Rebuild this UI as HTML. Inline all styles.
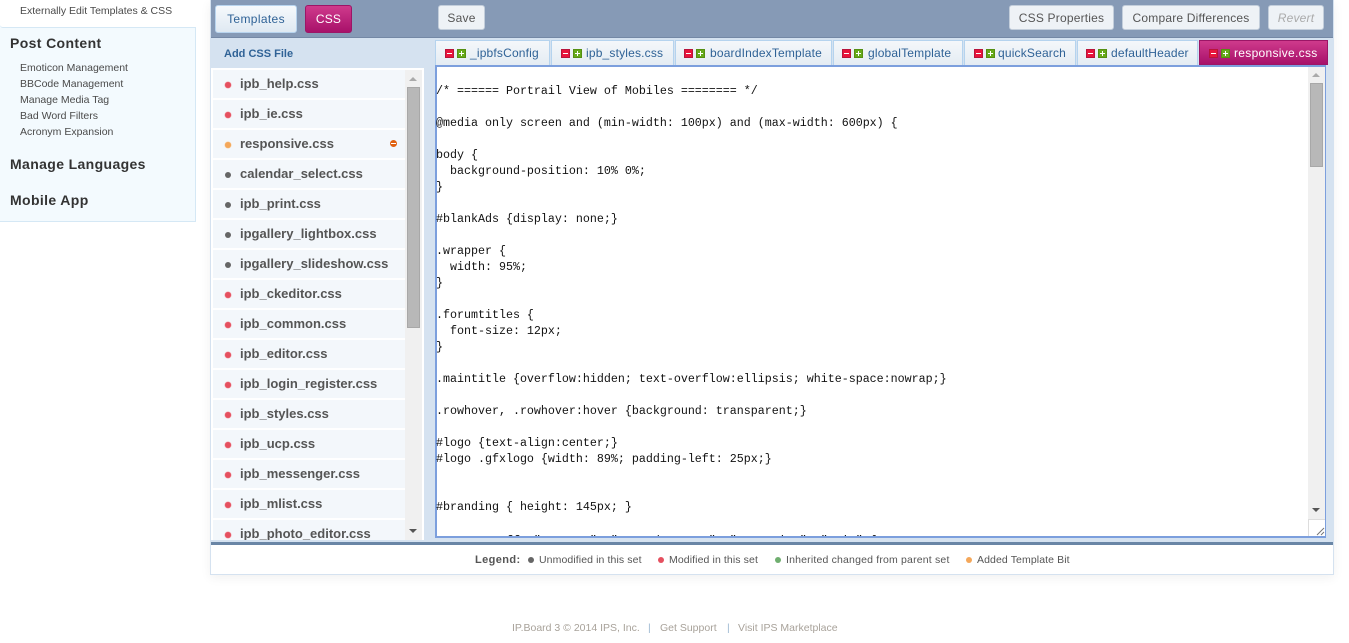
<!DOCTYPE html>
<html><head><meta charset="utf-8"><title>Template Editor</title>
<style>
html,body{margin:0;padding:0;width:1349px;height:643px;overflow:hidden;background:#fff;font-family:"Liberation Sans",Arial,sans-serif}
div,span,a{box-sizing:border-box}
.a{position:absolute;white-space:nowrap}
.btn{position:absolute;top:5px;height:25px;line-height:24px;text-align:center;font-size:12px;letter-spacing:.2px;color:#555;background:#eef2f6;border:1px solid #c3cedb;border-radius:3px}
.side{left:20px;font-size:10.5px;color:#4a4a4a;height:16px;line-height:16px}
.h{left:10px;font-size:14px;font-weight:bold;color:#333;height:20px;line-height:20px;letter-spacing:.37px}
.it{position:absolute;left:213px;width:192px;height:28px;background:#f3f7fb}
.it b{position:absolute;left:27px;top:6px;font-size:13px;line-height:16px;color:#555;white-space:nowrap}
.it i{position:absolute;left:12px;top:12px;width:6px;height:6px;border-radius:50%;background:#e5505f;box-shadow:0 0 0 .5px #f2a0a8}
.tab{position:absolute;top:40px;height:25px;background:linear-gradient(#f4f7fa,#e4ecf3);border:1px solid #b5d3ee;border-bottom:0;font-size:12px;letter-spacing:.18px;color:#2f6296;line-height:24px;white-space:nowrap}
.tab span{position:absolute;top:0;white-space:nowrap}
.tab span.m,.tab span.p{top:8px;width:9px;height:9px}
.tab span.m{background:#e8153c;border:1px solid #b8143a}.m:after{content:"";position:absolute;left:1px;top:3px;width:5px;height:1px;background:#fff}
.tab span.p{background:#66aa1a;border:1px solid #558f12}.p:after{content:"";position:absolute;left:1px;top:3px;width:5px;height:1px;background:#fff}.p:before{content:"";position:absolute;left:3px;top:1px;width:1px;height:5px;background:#fff}
.tab.on{background:linear-gradient(#cf3a8c,#a8116a);border:1px solid #9c1566;color:#fff;letter-spacing:.3px}
pre{position:absolute;left:436px;top:83px;margin:0;font-family:"Liberation Mono","Courier New",monospace;font-size:11.67px;line-height:16px;color:#111;width:870px;height:453px;overflow:hidden}
.lg{position:absolute;top:553px;font-size:10.5px;color:#555;line-height:14px;white-space:nowrap}
.dot{position:absolute;top:557px;width:6px;height:6px;border-radius:50%}
.ft{position:absolute;top:621px;font-size:10.5px;line-height:14px;color:#a8a29a;white-space:nowrap}
</style></head><body>
<!-- sidebar -->
<div class="a" style="left:0;top:0;width:196px;height:222px;background:#f3fafe;border-right:1px solid #d5e8f5;border-bottom:1px solid #d5e8f5"></div>
<div class="a" style="left:0;top:0;width:196px;height:28px;background:#fff;border-bottom:1px solid #d5e8f5;border-bottom-left-radius:3px"></div>
<div class="a side" style="top:3px">Externally Edit Templates &amp; CSS</div>
<div class="a h" style="top:33px">Post Content</div>
<div class="a side" style="top:60px">Emoticon Management</div>
<div class="a side" style="top:76px">BBCode Management</div>
<div class="a side" style="top:92px">Manage Media Tag</div>
<div class="a side" style="top:108px">Bad Word Filters</div>
<div class="a side" style="top:124px">Acronym Expansion</div>
<div class="a h" style="top:154px">Manage Languages</div>
<div class="a h" style="top:190px">Mobile App</div>
<!-- main -->
<div class="a" style="left:210px;top:0;width:1124px;height:575px;background:#fff;border:1px solid #d5e2f0;border-top:0;box-shadow:0 3px 10px rgba(0,0,0,.06)"></div>
<div class="a" style="left:211px;top:0;width:1122px;height:38px;background:#869ab6;border-bottom:1px solid #7488a5"></div>
<div class="a" style="left:211px;top:38px;width:1122px;height:505px;background:#d5e2f0"></div>
<div class="a" style="left:211px;top:542px;width:1122px;height:3px;background:#6a86a6"></div>
<div class="btn" style="left:215px;top:5px;width:82px;height:28px;line-height:26px;letter-spacing:.35px;color:#2f6296;background:linear-gradient(#f6f9fc,#dfe9f2);border-color:#b8d4ee">Templates</div>
<div class="btn" style="left:305px;top:5px;width:47px;height:28px;line-height:26px;color:#fff;background:linear-gradient(#cf3a8c,#a8116a);border-color:#9c1566">CSS</div>
<div class="btn" style="left:438px;width:47px">Save</div>
<div class="btn" style="left:1009px;width:105px">CSS Properties</div>
<div class="btn" style="left:1122px;width:138px">Compare Differences</div>
<div class="btn" style="left:1268px;width:56px;color:#aaa;font-style:italic">Revert</div>
<div class="a" style="left:224px;top:47px;font-size:11px;font-weight:bold;color:#2f6296;line-height:14px">Add CSS File</div>
<!-- list -->
<div class="a" style="left:211px;top:68px;width:213px;height:472px;background:#fff;overflow:hidden"></div>
<div class="it" style="top:70px"><i></i><b>ipb_help.css</b></div>
<div class="it" style="top:100px"><i></i><b>ipb_ie.css</b></div>
<div class="it" style="top:130px"><i style="background:#f4a75a;box-shadow:0 0 0 .5px #f8cfa0"></i><b>responsive.css</b><span style="position:absolute;left:177px;top:10px;width:7px;height:7px;border-radius:50%;background:#e0600f"><span style="position:absolute;left:1px;top:3px;width:5px;height:1px;background:#fff"></span></span></div>
<div class="it" style="top:160px"><i style="background:#666;box-shadow:none"></i><b>calendar_select.css</b></div>
<div class="it" style="top:190px"><i style="background:#666;box-shadow:none"></i><b>ipb_print.css</b></div>
<div class="it" style="top:220px"><i style="background:#666;box-shadow:none"></i><b>ipgallery_lightbox.css</b></div>
<div class="it" style="top:250px"><i style="background:#666;box-shadow:none"></i><b>ipgallery_slideshow.css</b></div>
<div class="it" style="top:280px"><i></i><b>ipb_ckeditor.css</b></div>
<div class="it" style="top:310px"><i></i><b>ipb_common.css</b></div>
<div class="it" style="top:340px"><i></i><b>ipb_editor.css</b></div>
<div class="it" style="top:370px"><i></i><b>ipb_login_register.css</b></div>
<div class="it" style="top:400px"><i></i><b>ipb_styles.css</b></div>
<div class="it" style="top:430px"><i></i><b>ipb_ucp.css</b></div>
<div class="it" style="top:460px"><i></i><b>ipb_messenger.css</b></div>
<div class="it" style="top:490px"><i></i><b>ipb_mlist.css</b></div>
<div class="it" style="top:520px;height:20px;overflow:hidden"><i></i><b>ipb_photo_editor.css</b></div>
<div class="a" style="left:405px;top:70px;width:17px;height:470px;background:#f0f0f0"></div>
<div class="a" style="left:407px;top:87px;width:13px;height:241px;background:#b8b8b8;border:1px solid #a8a8a8"></div>
<div class="a" style="left:409px;top:77px;width:0;height:0;border-left:4px solid transparent;border-right:4px solid transparent;border-bottom:4px solid #aaa"></div>
<div class="a" style="left:409px;top:529px;width:0;height:0;border-left:4px solid transparent;border-right:4px solid transparent;border-top:4px solid #555"></div>
<!-- tabs -->
<div class="tab" style="left:435px;width:115px"><span class="m" style="left:9px"></span><span class="p" style="left:21px"></span><span style="left:34px">_ipbfsConfig</span></div>
<div class="tab" style="left:551px;width:123px"><span class="m" style="left:9px"></span><span class="p" style="left:21px"></span><span style="left:34px">ipb_styles.css</span></div>
<div class="tab" style="left:675px;width:157px"><span class="m" style="left:8px"></span><span class="p" style="left:20px"></span><span style="left:34px">boardIndexTemplate</span></div>
<div class="tab" style="left:833px;width:130px"><span class="m" style="left:8px"></span><span class="p" style="left:20px"></span><span style="left:34px">globalTemplate</span></div>
<div class="tab" style="left:964px;width:112px"><span class="m" style="left:9px"></span><span class="p" style="left:21px"></span><span style="left:33px">quickSearch</span></div>
<div class="tab" style="left:1077px;width:121px"><span class="m" style="left:8px"></span><span class="p" style="left:20px"></span><span style="left:33px">defaultHeader</span></div>
<div class="tab on" style="left:1199px;width:129px"><span class="m" style="left:9px"></span><span class="p" style="left:21px"></span><span style="left:34px">responsive.css</span></div>
<!-- editor -->
<div class="a" style="left:435px;top:65px;width:891px;height:473px;background:#fff;border:2px solid #7c9fdd"></div>
<pre>/* ====== Portrail View of Mobiles ======== */

@media only screen and (min-width: 100px) and (max-width: 600px) {

body {
  background-position: 10% 0%;
}

#blankAds {display: none;}

.wrapper {
  width: 95%;
}

.forumtitles {
  font-size: 12px;
}

.maintitle {overflow:hidden; text-overflow:ellipsis; white-space:nowrap;}

.rowhover, .rowhover:hover {background: transparent;}

#logo {text-align:center;}
#logo .gfxlogo {width: 89%; padding-left: 25px;}


#branding { height: 145px; }

<span style="position:relative;top:2px">#content_off, "content", "secondary_nav", "community", "main" {</span></pre>
<div class="a" style="left:1308px;top:67px;width:17px;height:452px;background:#f0f0f0"></div>
<div class="a" style="left:1310px;top:83px;width:13px;height:84px;background:#b8b8b8;border:1px solid #a8a8a8"></div>
<div class="a" style="left:1312px;top:73px;width:0;height:0;border-left:4px solid transparent;border-right:4px solid transparent;border-bottom:4px solid #aaa"></div>
<div class="a" style="left:1312px;top:508px;width:0;height:0;border-left:4px solid transparent;border-right:4px solid transparent;border-top:4px solid #555"></div>
<div class="a" style="left:1308px;top:519px;width:17px;height:17px;background:#fff;border:1px solid #ddd;border-bottom:0;border-right:0"></div>
<svg class="a" style="left:1316px;top:527px" width="9" height="9"><path d="M1 8L8 1M5 8L8 5" stroke="#777" fill="none"/></svg>
<!-- legend -->
<div class="lg" style="left:475px;font-weight:bold;font-size:11px;letter-spacing:.4px">Legend:</div>
<span class="dot" style="left:528px;background:#666"></span><div class="lg" style="left:539px;letter-spacing:.1px">Unmodified in this set</div>
<span class="dot" style="left:658px;background:#e5505f"></span><div class="lg" style="left:669px;letter-spacing:.1px">Modified in this set</div>
<span class="dot" style="left:775px;background:#6fae6f"></span><div class="lg" style="left:786px;letter-spacing:.18px">Inherited changed from parent set</div>
<span class="dot" style="left:966px;background:#f4a75a"></span><div class="lg" style="left:977px;letter-spacing:.1px">Added Template Bit</div>
<!-- footer -->
<div class="ft" style="left:512px">IP.Board 3 © 2014 IPS, Inc.</div>
<div class="ft" style="left:648px;color:#9db8d2">|</div>
<div class="ft" style="left:660px">Get Support</div>
<div class="ft" style="left:727px;color:#9db8d2">|</div>
<div class="ft" style="left:738px">Visit IPS Marketplace</div>
</body></html>
